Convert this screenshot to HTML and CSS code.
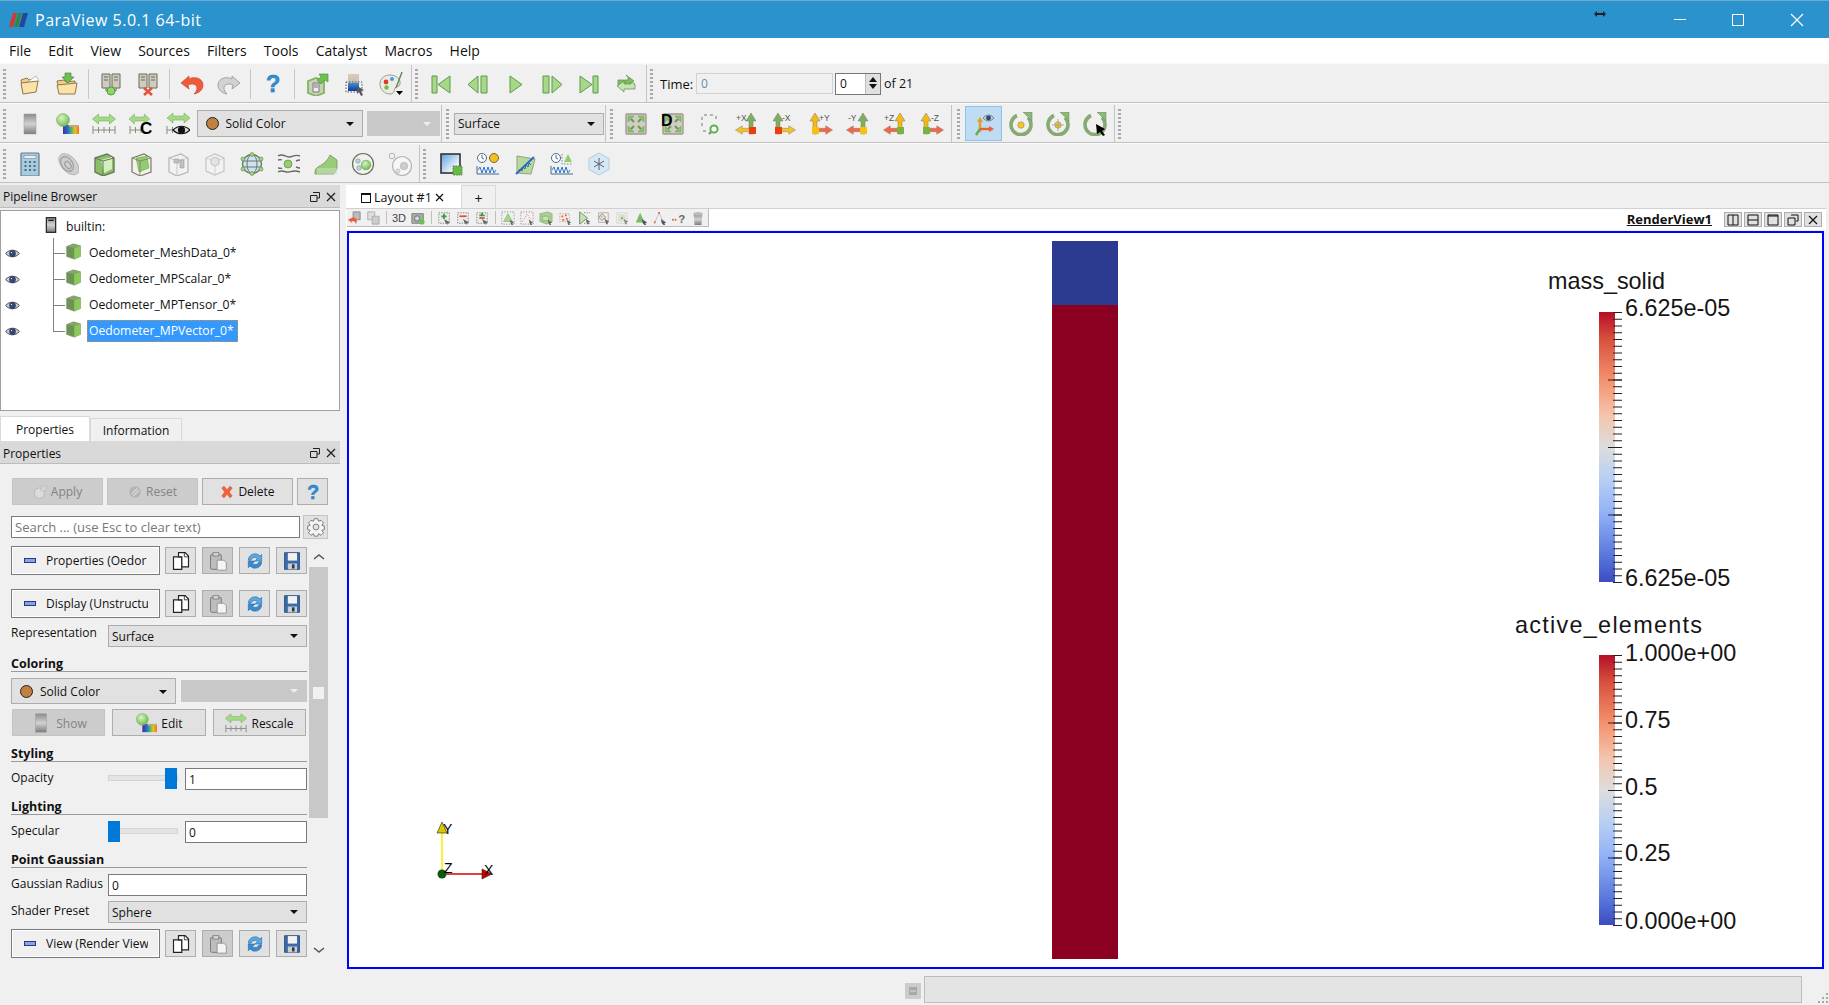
FILE: index.html
```html
<!DOCTYPE html>
<html lang="en">
<head>
<meta charset="UTF-8">
<title>ParaView 5.0.1 64-bit</title>
<link rel="stylesheet" href="styles.css">
</head>
<body>

<!-- icon sprite, everything below is drawn on a 24x24 box unless noted -->
<svg class="sprite" width="0" height="0">
  <defs>
    <linearGradient id="g-bar" x1="0" x2="0" y1="0" y2="1"><stop offset="0" stop-color="#8c8c8c"/><stop offset=".5" stop-color="#d2d2d2"/><stop offset="1" stop-color="#7c7c7c"/></linearGradient>
    <linearGradient id="g-rain" x1="0" x2="1" y1="0" y2="0"><stop offset="0" stop-color="#4a2a9a"/><stop offset=".3" stop-color="#2a6ad0"/><stop offset=".55" stop-color="#4ac060"/><stop offset=".75" stop-color="#f0c020"/><stop offset="1" stop-color="#f07020"/></linearGradient>
    <linearGradient id="g-map" x1="0" x2="0" y1="0" y2="1"><stop offset="0" stop-color="#d8cdb8"/><stop offset=".5" stop-color="#c8bfae"/><stop offset=".55" stop-color="#3a8ad8"/><stop offset="1" stop-color="#1a3a9a"/></linearGradient>
    <linearGradient id="g-box" x1="0" x2="1" y1="0" y2="1"><stop offset="0" stop-color="#5aa0e0"/><stop offset=".7" stop-color="#e8f2fa"/><stop offset="1" stop-color="#fff"/></linearGradient>
    <radialGradient id="g-ball" cx=".4" cy=".35" r=".7"><stop offset="0" stop-color="#d8f4c0"/><stop offset="1" stop-color="#6ab84a"/></radialGradient>
    <path id="arr-u" d="M-2 22V9h-3l5-8 5 8h-3v13z" stroke="#7a7a60" stroke-width=".5"/>
    <path id="arr-h" d="M0 -2h15v-3l8 5-8 5v-3H0z" stroke="#7a7a60" stroke-width=".5"/>
    <path id="arr-d" d="M0 0l6-5v3h11v-3l6 5-6 5v-3H6v3z" fill="#a2dc82" stroke="#7ea868" stroke-width=".6"/>
    <path id="bolt-c" d="M8 3.500a10 10 0 1 0 11 2" fill="none" stroke="#86aa72" stroke-width="3.600"/>
  </defs>

  <symbol id="i-open" viewBox="0 0 24 24"><path d="M3 8l6-2 2 2 5-1 2 8-13 5z" fill="#f0cf88" stroke="#8c7a50"/><path d="M8 11l10-7 3 5-9 6z" fill="#fff" stroke="#a0a0a0" stroke-width=".7"/><path d="M3 11l17-2-2 11-13 2z" fill="#fbe2a6" stroke="#8c7a50"/></symbol>
  <symbol id="i-load" viewBox="0 0 24 24"><path d="M2 9l7-1 2 2 9-1v4H3z" fill="#f0cf88" stroke="#8c7a50"/><path d="M2 13l20-2-2 11H4z" fill="#fbe2a6" stroke="#8c7a50"/><path d="M10 1h6v4h3l-6 6-6-6h3z" fill="#6cc050" stroke="#4a8a38" stroke-width=".7"/></symbol>
  <symbol id="i-conn" viewBox="0 0 24 24"><path d="M3 2h8v14H3zM13 2h8v14h-8z" fill="#d0ccbc" stroke="#6a6a5e"/><path d="M5 5h4M5 8h4M15 5h4M15 8h4" stroke="#6a6a5e"/><path d="M7 16v3h10v-3" fill="none" stroke="#6a6a5e"/><circle cx="12" cy="19" r="4" fill="#8ed868" stroke="#5a9a44"/></symbol>
  <symbol id="i-disc" viewBox="0 0 24 24"><path d="M3 2h8v14H3zM13 2h8v14h-8z" fill="#d0ccbc" stroke="#6a6a5e"/><path d="M5 5h4M5 8h4M15 5h4M15 8h4" stroke="#6a6a5e"/><path d="M8 16l8 7M16 16l-8 7" stroke="#e8523a" stroke-width="2.600"/></symbol>
  <symbol id="i-undo" viewBox="0 0 24 24"><path d="M9 4L1 11l8 6-1-4c4-2 9-1 9 3 0 2-1 4-3 6 5-1 9-4 9-9 0-7-9-9-14-6z" fill="#f0593a" stroke="#c8472a" stroke-width=".7"/></symbol>
  <symbol id="i-redo" viewBox="0 0 24 24"><path d="M15 4l8 7-8 6 1-4c-4-2-9-1-9 3 0 2 1 4 3 6-5-1-9-4-9-9 0-7 9-9 14-6z" fill="#d2d2d2" stroke="#a4a4a4"/></symbol>
  <symbol id="i-srvgo" viewBox="0 0 24 24"><path d="M3 9l8-3 8 3v12l-8 3-8-3z" fill="#d0ccbc" stroke="#7cb85c" stroke-width="1.800"/><path d="M8 11h6v9H8z" fill="#eee" stroke="#777"/><path d="M9 13h4M9 15h4" stroke="#777"/><path d="M12 8l4-3-2-3h9v8l-3-2-4 4z" fill="#6cc050" stroke="#4a8a38" stroke-width=".6"/></symbol>
  <symbol id="i-cmap" viewBox="0 0 24 24"><path d="M6 2h11v17H6z" fill="url(#g-map)"/><path d="M4 10h16v10H4z" fill="none" stroke="#555" stroke-dasharray="1.500 1.500"/><path d="M15 14l7 4-3 1 2 4-2 1-2-4-2 2z" fill="#556"/></symbol>
  <symbol id="i-palette" viewBox="0 0 24 24"><path d="M11 3c6 0 11 4 10 9 0 3-4 2-5 4-1 3-1 6-5 6-5 0-10-4-10-10S6 3 11 3z" fill="#ecebe4" stroke="#9a9a90"/><circle cx="13" cy="7" r="2" fill="#3ca0e0"/><circle cx="7" cy="10" r="2.400" fill="#e03c28"/><circle cx="7.500" cy="15.500" r="2.200" fill="#6cc050"/><path d="M17 16L23 0" stroke="#5c8a50" stroke-width="1.400"/><path d="M17 19h7l-3.500 4z" fill="#000"/></symbol>

  <symbol id="i-first" viewBox="0 0 24 24"><path d="M3 4h5v17H3zM21 4v17L9 12.500z" fill="#a6d888" stroke="#5f9a4a"/></symbol>
  <symbol id="i-prev" viewBox="0 0 24 24"><path d="M12 4v17L2 12.500zM15 4h6v17h-6z" fill="#a6d888" stroke="#5f9a4a"/></symbol>
  <symbol id="i-play" viewBox="0 0 24 24"><path d="M7 4v17l12-8.500z" fill="#a6d888" stroke="#5f9a4a"/></symbol>
  <symbol id="i-next" viewBox="0 0 24 24"><path d="M3 4h6v17H3zM12 4v17l10-8.500z" fill="#a6d888" stroke="#5f9a4a"/></symbol>
  <symbol id="i-last" viewBox="0 0 24 24"><path d="M3 4v17l12-8.500zM16 4h5v17h-5z" fill="#a6d888" stroke="#5f9a4a"/></symbol>
  <symbol id="i-loop" viewBox="0 0 24 24"><path d="M4 13V8h10V5l-2-2 8 6-8 5v-3H8v2z" fill="#7cc05c" stroke="#5f8a4a" stroke-width=".7"/><path d="M21 12v5H10v3l-7-6 7-5v3h7v-2z" fill="#c6e4b0" stroke="#5f8a4a" stroke-width=".7"/></symbol>

  <symbol id="i-bar" viewBox="0 0 24 24"><rect x="6" y="2" width="12" height="20" fill="url(#g-bar)" stroke="#999" stroke-width=".5"/></symbol>
  <symbol id="i-edit" viewBox="0 0 24 24"><rect x="8" y="13" width="16" height="9" fill="url(#g-rain)"/><path d="M14 13h10v2H14z" fill="#c8a878"/><circle cx="8" cy="8" r="6.500" fill="url(#g-ball)" stroke="#7aa860" stroke-width=".5"/></symbol>
  <symbol id="i-rescale" viewBox="0 0 24 24"><use href="#arr-d" transform="translate(.5 7)"/><path d="M1 18h22M1 14v8M6.500 15v6M12 15v6M17.500 15v6M23 14v8" stroke="#8a8a80" fill="none"/></symbol>
  <symbol id="i-rsc" viewBox="0 0 24 24"><use href="#arr-d" transform="translate(0 7) scale(.9 1)"/><path d="M1 18h12M1 14v8M6.500 15v6M12 15v6" stroke="#8a8a80" fill="none"/></symbol>
  <symbol id="i-rse" viewBox="0 0 24 24"><use href="#arr-d" transform="translate(1 6)"/><path d="M1 18h10M1 14v8M6.500 15v6" stroke="#8a8a80" fill="none"/><path d="M7 18c5-5 12-5 17 0-5 5-12 5-17 0z" fill="#ddd" stroke="#111" stroke-width="1.200"/><circle cx="15.500" cy="18" r="3.600" fill="#111"/></symbol>

  <symbol id="i-reset" viewBox="0 0 24 24"><rect x="2" y="2" width="20" height="20" rx="1" fill="#d0cec2" stroke="#9e9c8e" stroke-width="1.400"/><path d="M10 10L7 7M14 10l3-3M10 14l-3 3M14 14l3 3" stroke="#6e9a54" stroke-width="2.200"/><path d="M4 10V4h6zM20 10V4h-6zM4 14v6h6zM20 14v6h-6z" fill="#8cc070" stroke="#6e9a54" stroke-width=".5"/></symbol>
  <symbol id="i-zoombox" viewBox="0 0 24 24"><path d="M6 3h12M4 5v12M5 19h5" stroke="#777" stroke-dasharray="3 3" fill="none"/><path d="M18 4v6" stroke="#777" stroke-dasharray="3 3"/><circle cx="16" cy="17" r="3.600" fill="#fff" stroke="#5ab04a" stroke-width="2"/><path d="M13 20l-2 2" stroke="#5ab04a" stroke-width="2.400"/></symbol>

  <symbol id="i-px" viewBox="0 0 24 24"><use href="#arr-u" transform="translate(16 0)" fill="#7cb060"/><use href="#arr-h" transform="translate(20 18) scale(-.85 .85)" fill="#f4c028"/><rect x="14" y="15" width="7" height="7" fill="#f03a10"/></symbol>
  <symbol id="i-mx" viewBox="0 0 24 24"><use href="#arr-u" transform="translate(6 0)" fill="#7cb060"/><use href="#arr-h" transform="translate(4 18) scale(.85)" fill="#f4c028"/><rect x="3" y="15" width="7" height="7" fill="#f03a10"/></symbol>
  <symbol id="i-py" viewBox="0 0 24 24"><use href="#arr-u" transform="translate(6 0)" fill="#f4b818"/><use href="#arr-h" transform="translate(4 18) scale(.85)" fill="#f0684a"/><rect x="3" y="15" width="7" height="7" fill="#f8c010"/></symbol>
  <symbol id="i-my" viewBox="0 0 24 24"><use href="#arr-u" transform="translate(17 0)" fill="#7cb060"/><use href="#arr-h" transform="translate(20 18) scale(-.85 .85)" fill="#f0684a"/><rect x="14" y="15" width="7" height="7" fill="#f8c010"/></symbol>
  <symbol id="i-pz" viewBox="0 0 24 24"><use href="#arr-u" transform="translate(17 0)" fill="#f4b818"/><use href="#arr-h" transform="translate(20 18) scale(-.85 .85)" fill="#f0684a"/><rect x="14" y="15" width="7" height="7" fill="#7cb040"/></symbol>
  <symbol id="i-mz" viewBox="0 0 24 24"><use href="#arr-u" transform="translate(6 0)" fill="#f4b818"/><use href="#arr-h" transform="translate(4 18) scale(.85)" fill="#f0684a"/><rect x="3" y="15" width="7" height="7" fill="#7cb040"/></symbol>

  <symbol id="i-axes" viewBox="0 0 24 24"><path d="M8 20V9" stroke="#e0a020" stroke-width="2.400"/><path d="M5 10l3-5 3 5z" fill="#e0a020"/><path d="M8 17h10" stroke="#e8603a" stroke-width="2.400"/><path d="M17 14l5 3-5 3z" fill="#e8603a"/><path d="M8 17l-4 6" stroke="#6aa848" stroke-width="2.400"/><path d="M11 6c3-4 8-4 11 0-3 4-8 4-11 0z" fill="#b8c8d8" stroke="#555" stroke-width=".6"/><circle cx="16.500" cy="6" r="2.400" fill="#2a4a7a"/></symbol>
  <symbol id="i-center" viewBox="0 0 24 24"><use href="#bolt-c"/><path d="M14 0h9v9z" fill="#8cb878" stroke="#6a8a58" stroke-width=".5"/><circle cx="12" cy="13" r="3.200" fill="#f8c820" stroke="#888" stroke-width=".6"/></symbol>
  <symbol id="i-center2" viewBox="0 0 24 24"><use href="#bolt-c"/><path d="M14 0h9v9z" fill="#8cb878" stroke="#6a8a58" stroke-width=".5"/><circle cx="12" cy="13" r="3.200" fill="#f8c820" stroke="#888" stroke-width=".6"/><path d="M12 7v12M6 13h12" stroke="#999" stroke-width=".8"/></symbol>
  <symbol id="i-pick" viewBox="0 0 24 24"><use href="#bolt-c"/><path d="M14 0h9v9z" fill="#8cb878" stroke="#6a8a58" stroke-width=".5"/><path d="M13 12l9 5-3 2 3 4-2 1-3-4-3 2z" fill="#000"/></symbol>

  <symbol id="i-calc" viewBox="0 0 24 24"><rect x="3" y="1" width="18" height="23" rx="1" fill="#a4cce4" stroke="#6a7a80" stroke-width="1.200"/><rect x="6" y="3.500" width="12" height="3" fill="#e8eef2" stroke="#6a7a80" stroke-width=".5"/><path d="M6.500 9h2v2h-2zM11 9h2v2h-2zM15.500 9h2v2h-2zM6.500 13h2v2h-2zM11 13h2v2h-2zM15.500 13h2v2h-2zM6.500 17h2v2h-2zM11 17h2v2h-2zM15.500 17h2v2h-2z" fill="#5a6a72"/></symbol>
  <symbol id="i-contour" viewBox="0 0 24 24"><path d="M7 2c8-2 17 8 17 16 0 5-6 6-11 3C6 17 0 5 7 2z" fill="#cfcfcf" stroke="#b4b4b4"/><ellipse cx="12" cy="12" rx="5.500" ry="8" transform="rotate(-35 12 12)" fill="none" stroke="#a2a2a2" stroke-width="1.400"/><ellipse cx="13" cy="13" rx="2.500" ry="4" transform="rotate(-35 13 13)" fill="none" stroke="#a2a2a2" stroke-width="1.400"/></symbol>
  <symbol id="i-clip" viewBox="0 0 24 24"><path d="M3 6l12-4 7 4v14l-11 4-8-4z" fill="#8cc068" stroke="#6a7a5c" stroke-width="1.400"/><path d="M9 8l11-3v12l-8 4z" fill="#d4eec0"/><path d="M3 6l8 3v15M11 9l11-3" fill="none" stroke="#6a7a5c"/></symbol>
  <symbol id="i-slice" viewBox="0 0 24 24"><path d="M3 6l12-4 7 4v14l-11 4-8-4z" fill="#f2f2ec" stroke="#7a7a64" stroke-width="1.200"/><path d="M7 6l11-2 2 12-10 4z" fill="#92cc70" stroke="#6a9a4c" stroke-width=".5"/><path d="M3 6l8 3v15M11 9l11-3" fill="none" stroke="#7a7a64" stroke-width=".8"/></symbol>
  <symbol id="i-thresh" viewBox="0 0 24 24"><path d="M3 6l12-4 7 4v14l-11 4-8-4z" fill="#f2f2f2" stroke="#b4b4b4" stroke-width="1.200"/><path d="M3 6l8 3v15M11 9l11-3" fill="none" stroke="#bebebe" stroke-width=".8"/><path d="M8 7h5v4H8zM14 8h4v8h-4z" fill="#c0c0c0" stroke="#9c9c9c" stroke-width=".6"/></symbol>
  <symbol id="i-extract" viewBox="0 0 24 24"><path d="M3 6l9-4 9 4v13l-9 4-9-4z" fill="#f2f2f2" stroke="#c4c4c4" stroke-width="1.200"/><path d="M3 6l9 4v13M12 10l9-4" fill="none" stroke="#cccccc" stroke-width=".8"/><path d="M8 7l4-2 4 2v5l-4 2-4-2z" fill="#e4e4e4" stroke="#b4b4b4" stroke-width=".8"/></symbol>
  <symbol id="i-glyph" viewBox="0 0 24 24"><circle cx="12" cy="12" r="9.500" fill="#cfe2f2" stroke="#6a7868" stroke-width="1.400"/><ellipse cx="12" cy="12" rx="5" ry="9.500" fill="none" stroke="#6a7868"/><path d="M3 9h18M3 15h18" stroke="#6a7868"/><g fill="#9ed47a" stroke="#5f8a4a" stroke-width=".6"><circle cx="12" cy="2.500" r="2"/><circle cx="12" cy="21.500" r="2"/><circle cx="3" cy="7" r="2"/><circle cx="21" cy="7" r="2"/><circle cx="3" cy="17" r="2"/><circle cx="21" cy="17" r="2"/></g></symbol>
  <symbol id="i-stream" viewBox="0 0 24 24"><path d="M1 4c5-3 7 1 11 1s6-3 11-1M1 8c4-1 3 0 4 0M19 9c2-1 3-1 4-1M1 16c2 0 3 1 4 0M19 15c2 1 3 1 4 1M1 20c5-3 7 1 11 0s6-2 11 0" fill="none" stroke="#6a6a5c" stroke-width="1.400"/><circle cx="11" cy="12" r="4" fill="#96d06e" stroke="#5f8a4a" stroke-width=".7"/></symbol>
  <symbol id="i-warp" viewBox="0 0 24 24"><path d="M1 20c0-7 10-5 15-17l7 5v9c-3 4-3 5-3 5H1z" fill="#98cc78" stroke="#6a8a58" stroke-width=".7"/><path d="M3 16h20v6H3z" fill="#c8dcb8" opacity=".6"/></symbol>
  <symbol id="i-group" viewBox="0 0 24 24"><circle cx="12" cy="12" r="10.500" fill="#f2f2ea" stroke="#6a6a5c" stroke-width="1.200"/><circle cx="15" cy="13" r="4.800" fill="url(#g-ball)" stroke="#5f8a4a" stroke-width=".5"/><circle cx="7" cy="9" r="2.200" fill="#b4d8ec" stroke="#6a8a9c" stroke-width=".6"/><circle cx="8" cy="16" r="2.200" fill="#b4d8ec" stroke="#6a8a9c" stroke-width=".6"/></symbol>
  <symbol id="i-extrb" viewBox="0 0 24 24"><circle cx="14" cy="14" r="9.500" fill="#f6f6f6" stroke="#b4b4b4" stroke-width="1.200"/><circle cx="16" cy="14" r="3.800" fill="#cccccc" stroke="#aaa" stroke-width=".5"/><circle cx="10" cy="19" r="2" fill="#e4e4e4" stroke="#aaa" stroke-width=".6"/><circle cx="4" cy="4" r="2.800" fill="#f0f0f0" stroke="#b4b4b4"/></symbol>

  <symbol id="i-sel" viewBox="0 0 24 24"><rect x="2" y="2" width="19" height="19" fill="url(#g-box)" stroke="#333" stroke-width="1.600"/><rect x="14" y="14" width="9" height="9" fill="#6cb84a" stroke="#4a8a38" stroke-dasharray="1.500 1"/></symbol>
  <symbol id="i-plot" viewBox="0 0 24 24"><circle cx="6" cy="6" r="4.500" fill="#fff" stroke="#4a6a8a"/><path d="M6 3v3l2 1" stroke="#4a6a8a" fill="none"/><circle cx="18" cy="6" r="4.500" fill="#f4c020" stroke="#7a6a30"/><path d="M1 14v8h22" stroke="#4a6a8a" fill="none"/><path d="M2 18l2-3 2 6 2-6 2 6 2-6 2 6 2-6 2 6 2-3" stroke="#2a7ac8" fill="none"/></symbol>
  <symbol id="i-line" viewBox="0 0 24 24"><path d="M4 4l18 3-4 15-14-1z" fill="#b8d8a0" stroke="#8aa878"/><path d="M3 22L21 5" stroke="#2a6ac8" stroke-width="2"/><path d="M6 20l1-3 2 2 1-4 2 2 1-4 2 2 1-4 2 2" stroke="#3a6a8a" fill="none"/></symbol>
  <symbol id="i-plots" viewBox="0 0 24 24"><circle cx="6" cy="6" r="4.500" fill="#fff" stroke="#4a6a8a"/><path d="M6 3v3l2 1" stroke="#4a6a8a" fill="none"/><path d="M14 10l4-8 4 8z" fill="#8ed068"/><path d="M12 2v10h11" stroke="#888" stroke-dasharray="1.500 1.500" fill="none"/><path d="M1 14v8h22" stroke="#4a6a8a" fill="none"/><path d="M2 18l2-3 2 6 2-6 2 6 2-6 2 6 2-6 2 6 2-3" stroke="#2a7ac8" fill="none"/></symbol>
  <symbol id="i-hex" viewBox="0 0 24 24"><path d="M12 1l10 5.500v11L12 23 2 17.500v-11z" fill="#d6e8f4" stroke="#b4cadc"/><path d="M12 6v12M7 9l10 6M17 9L7 15" stroke="#56626e"/></symbol>

  <symbol id="i-eye" viewBox="0 0 24 16"><path d="M1 8c6-7 16-7 22 0-6 7-16 7-22 0z" fill="#cfd4da" stroke="#333" stroke-width="1.400"/><circle cx="12" cy="8" r="5" fill="#2f4a7c" stroke="#1a1a2a" stroke-width=".6"/><circle cx="10.500" cy="6.500" r="1" fill="#fff"/></symbol>
  <symbol id="i-cube" viewBox="0 0 24 24"><path d="M2 5l10-4 10 3v15l-9 4-11-4z" fill="#6e9455" stroke="#8a9a7c" stroke-width=".6"/><path d="M13 7l9-3v15l-9 4z" fill="#8dc85c"/><path d="M2 5l11 2 9-3-10-3z" fill="#87a56e"/></symbol>
  <symbol id="i-srv" viewBox="0 0 24 24"><rect x="5" y="1" width="14" height="22" fill="url(#g-bar)" stroke="#222" stroke-width="1.800"/><path d="M8 5h8" stroke="#222" stroke-width="2"/></symbol>
  <symbol id="i-apply" viewBox="0 0 24 24"><path d="M3 8l8-3 8 3v12l-8 3-8-3z" fill="#dcdcdc" stroke="#aaa"/><path d="M12 8l4-3-2-3h9v8l-3-2-4 4z" fill="#d4d4d4" stroke="#b0b0b0" stroke-width=".6"/></symbol>
  <symbol id="i-reset2" viewBox="0 0 24 24"><circle cx="12" cy="12" r="10" fill="#b4b4b4"/><path d="M6 16L16 6M9 19L19 9" stroke="#dcdcdc" stroke-width="2"/></symbol>
  <symbol id="i-del" viewBox="0 0 24 24"><path d="M3 5l4-3 5 6 5-6 4 3-5 7 5 7-4 3-5-6-5 6-4-3 5-7z" fill="#f0603c" stroke="#c8482a" stroke-width=".7"/></symbol>
  <symbol id="i-gear" viewBox="0 0 24 24"><path d="M10 2h4l1 3 3-1 3 3-2 3 3 1v4l-3 1 2 3-3 3-3-2-1 3h-4l-1-3-3 2-3-3 2-3-3-1v-4l3-1-2-3 3-3 3 1z" fill="#f4f4f4" stroke="#6a6a6a"/><circle cx="12" cy="12" r="3.500" fill="#e4e4e4" stroke="#6a6a6a"/></symbol>
  <symbol id="i-copy" viewBox="0 0 24 24"><path d="M3 7h10v15H3z" fill="#fff" stroke="#222" stroke-width="1.400"/><path d="M9 2h8l4 4v13h-8V7H9z" fill="#fff" stroke="#222" stroke-width="1.400"/><path d="M16 2v5h5" fill="none" stroke="#222"/></symbol>
  <symbol id="i-paste" viewBox="0 0 24 24"><rect x="3" y="4" width="13" height="18" rx="2" fill="#bdbdbd" stroke="#7c7c7c" stroke-width="1.200"/><rect x="6" y="2" width="7" height="4" fill="#d8d8d8" stroke="#7c7c7c"/><path d="M11 11h8l3 3v9H11z" fill="#f4f4f4" stroke="#8c8c8c"/></symbol>
  <symbol id="i-sync" viewBox="0 0 24 24"><path d="M4 11a8 8 0 0 1 14-5l2-2v8h-8l3-3a5 5 0 0 0-8 2z" fill="#5aa8e0" stroke="#2a70b0" stroke-width=".8"/><path d="M20 13a8 8 0 0 1-14 5l-2 2v-8h8l-3 3a5 5 0 0 0 8-2z" fill="#3a8ad0" stroke="#2a70b0" stroke-width=".8"/></symbol>
  <symbol id="i-save" viewBox="0 0 24 24"><path d="M3 2h18v20H3z" fill="#3a6aa8" stroke="#2a4a7a"/><rect x="7" y="2.500" width="11" height="9" fill="#f2f2f2"/><rect x="7" y="15" width="11" height="7" fill="#c8ccd4"/><rect x="12" y="16" width="3" height="5" fill="#333"/></symbol>

  <!-- render view toolbar, 16x16 -->
  <symbol id="v-undo" viewBox="0 0 16 16"><path d="M7 1h8v9H7z" fill="#bbb" stroke="#888"/><path d="M7 7L1 10l5 4-1-2c3-1 5 0 5 3 3-4 0-8-3-8z" fill="#e8603a"/></symbol>
  <symbol id="v-redo" viewBox="0 0 16 16"><path d="M2 1h8v9H2z" fill="#ddd" stroke="#aaa"/><path d="M7 6h8v9H7z" fill="#ccc" stroke="#aaa"/></symbol>
  <symbol id="v-shot" viewBox="0 0 16 16"><path d="M1 3h13v11H1z" fill="#a6aea6" stroke="#777"/><circle cx="7" cy="8.500" r="3" fill="#cdd" stroke="#666"/><circle cx="12.500" cy="12.500" r="3" fill="#6cc050"/></symbol>
  <symbol id="v-cplus" viewBox="0 0 16 16"><path d="M2 2h12v12H2z" fill="#ecece6" stroke="#777" stroke-dasharray="1.500 1.500"/><path d="M7 3h2v2h2v2H9v2H7V7H5V5h2z" fill="#3a9a4a"/><path d="M8 9l7 4-3 1 1 2-3-2z" fill="#666"/></symbol>
  <symbol id="v-cminus" viewBox="0 0 16 16"><path d="M2 2h12v12H2z" fill="#ecece6" stroke="#777" stroke-dasharray="1.500 1.500"/><path d="M4 5h8v2H4z" fill="#e04a4a"/><path d="M8 9l7 4-3 1 1 2-3-2z" fill="#666"/></symbol>
  <symbol id="v-cboth" viewBox="0 0 16 16"><path d="M2 2h12v12H2z" fill="#ecece6" stroke="#777" stroke-dasharray="1.500 1.500"/><path d="M7 2h2v2h2v2H5V4h2z" fill="#3a9a4a"/><path d="M5 7h6v2H5z" fill="#e04a4a"/><path d="M8 9l7 4-3 1 1 2-3-2z" fill="#666"/></symbol>
  <symbol id="v-surf" viewBox="0 0 16 16"><path d="M1 1h14v14H1z" fill="none" stroke="#666" stroke-dasharray="1 2"/><path d="M3 12L8 3l5 9z" fill="#a8d490" stroke="#7aa460" stroke-width=".6"/><path d="M10 10l5 3-2 1 1 2-2 0-1-2z" fill="#666"/></symbol>
  <symbol id="v-pts" viewBox="0 0 16 16"><path d="M1 1h14v14H1z" fill="none" stroke="#666" stroke-dasharray="1 2"/><path d="M3 12L8 3l5 9" fill="none" stroke="#e8603a" stroke-dasharray="1 2"/><path d="M10 10l5 3-2 1 1 2-2 0-1-2z" fill="#666"/></symbol>
  <symbol id="v-blk" viewBox="0 0 16 16"><path d="M1 3l9-2 5 2v9l-6 3-8-3z" fill="#a8d090" stroke="#84a474" stroke-width=".7"/><path d="M4 6h7v5H4z" fill="#c6e4b2" stroke="#7a9a68" stroke-width=".6"/><path d="M10 10l5 3-2 1 1 2-2 0-1-2z" fill="#666"/></symbol>
  <symbol id="v-red" viewBox="0 0 16 16"><path d="M2 3h11v9H2z" fill="#f4ece8" stroke="#aaa" stroke-dasharray="1.500 1.500"/><path d="M4 5h2v2H4zM8 4h2v2H8zM5 9h2v2H5zM9 8h2v2H9z" fill="#e8603a"/><path d="M10 10l5 3-2 1 1 2-2 0-1-2z" fill="#666"/></symbol>
  <symbol id="v-grn" viewBox="0 0 16 16"><path d="M3 1v14l9-7z" fill="#c4e2b2" stroke="#6a8a6a"/><path d="M8 2h7M8 14h7" stroke="#6a8a6a" stroke-dasharray="1.500 1.500"/><path d="M10 9l5 3-2 1 1 2-2 0-1-2z" fill="#666"/></symbol>
  <symbol id="v-rgr" viewBox="0 0 16 16"><path d="M3 2h11v11H3z" fill="#f2f0ea" stroke="#aaa"/><path d="M3 7l4-4 4 4-4 4z" fill="#e0e0cc" stroke="#888"/><path d="M6 6l1 1M9 9h2" stroke="#e8603a"/><path d="M10 9l5 3-2 1 1 2-2 0-1-2z" fill="#666"/></symbol>
  <symbol id="v-ptg" viewBox="0 0 16 16"><path d="M2 2h12v12H2z" fill="#eef0e8" stroke="#bbb" stroke-dasharray="1.500 1.500"/><path d="M4 4h8v8H4z" fill="#d6decc"/><path d="M7 7h2v2H7z" fill="#7aa85c"/><path d="M10 9l5 3-2 1 1 2-2 0-1-2z" fill="#888"/></symbol>
  <symbol id="v-tri" viewBox="0 0 16 16"><path d="M2 13L7 2l5 11z" fill="#7cbc60"/><path d="M9 9l6 4-2 1 1 2-2 0-2-2z" fill="#556"/></symbol>
  <symbol id="v-tri2" viewBox="0 0 16 16"><path d="M2 13L7 2l5 11" fill="none" stroke="#bbb"/><path d="M1 12h2v2H1zM6 1h2v2H6zM11 12h2v2h-2z" fill="#e8603a"/><path d="M9 9l6 4-2 1 1 2-2 0-2-2z" fill="#556"/></symbol>
  <symbol id="v-ask" viewBox="0 0 16 16"><rect x="0" y="9" width="2" height="2" fill="#e8603a"/><rect x="3" y="9" width="2" height="2" fill="#e8603a"/></symbol>
  <symbol id="v-bin" viewBox="0 0 16 16"><path d="M3 3h10l-1 13H4z" fill="url(#g-bar)"/><ellipse cx="8" cy="3" rx="5" ry="2" fill="#bbb"/></symbol>
</svg>

<div class="titlebar">
  <svg class="logo" width="20" height="14" viewBox="0 0 20 14">
    <path d="M4 0h4L4 14H0z" fill="#d6382c"/><path d="M9 0h4L9 14H5z" fill="#2e8a3e"/><path d="M14 0h5l-4 14h-5z" fill="#25469c"/>
  </svg>
  <span class="apptitle">ParaView 5.0.1 64-bit</span>
  <div class="winbtns">
    <span class="winbtn"><i class="w-min"></i></span>
    <span class="winbtn"><i class="w-max"></i></span>
    <span class="winbtn">
      <svg width="14" height="14" viewBox="0 0 14 14"><path d="M1 1l12 12M13 1L1 13" stroke="#fff" stroke-width="1.200"/></svg>
    </span>
  </div>
  <svg class="hcursor" width="12" height="8" viewBox="0 0 12 8"><path d="M0 4l3-3v2h6V1l3 3-3 3V5H3v2z" fill="#222"/></svg>
</div>

<nav class="menubar">
  <span>File</span><span>Edit</span><span>View</span><span>Sources</span><span>Filters</span><span>Tools</span><span>Catalyst</span><span>Macros</span><span>Help</span>
</nav>

<div class="tbrow">
  <div class="tgroup w-412">
    <i class="grip"></i>
    <span class="tb"><svg class="ic"><use href="#i-open"/></svg></span>
    <span class="tb"><svg class="ic"><use href="#i-load"/></svg></span>
    <i class="sep"></i>
    <span class="tb"><svg class="ic"><use href="#i-conn"/></svg></span>
    <span class="tb"><svg class="ic"><use href="#i-disc"/></svg></span>
    <i class="sep"></i>
    <span class="tb"><svg class="ic"><use href="#i-undo"/></svg></span>
    <span class="tb"><svg class="ic"><use href="#i-redo"/></svg></span>
    <i class="sep"></i>
    <span class="tb"><svg class="ic" viewBox="0 0 24 24"><text class="ic-q" x="12" y="20" text-anchor="middle">?</text></svg></span>
    <i class="sep"></i>
    <span class="tb"><svg class="ic"><use href="#i-srvgo"/></svg></span>
    <span class="tb"><svg class="ic"><use href="#i-cmap"/></svg></span>
    <span class="tb"><svg class="ic"><use href="#i-palette"/></svg></span>
  </div>
  <div class="tgroup w-235">
    <i class="grip"></i>
    <span class="tb"><svg class="ic"><use href="#i-first"/></svg></span>
    <span class="tb"><svg class="ic"><use href="#i-prev"/></svg></span>
    <span class="tb"><svg class="ic"><use href="#i-play"/></svg></span>
    <span class="tb"><svg class="ic"><use href="#i-next"/></svg></span>
    <span class="tb"><svg class="ic"><use href="#i-last"/></svg></span>
    <span class="tb"><svg class="ic"><use href="#i-loop"/></svg></span>
  </div>
  <div class="tgroup noline">
    <i class="grip"></i>
    <span class="timelabel">Time:</span>
    <span class="timefield">0</span>
    <span class="spin">0<span class="spinarrows"><i class="sp-up"></i><i class="sp-down"></i></span></span>
    <span class="timeof">of 21</span>
  </div>
</div>

<div class="tbrow">
  <div class="tgroup w-442">
    <i class="grip"></i>
    <span class="tb"><svg class="ic"><use href="#i-bar"/></svg></span>
    <span class="tb"><svg class="ic"><use href="#i-edit"/></svg></span>
    <span class="tb"><svg class="ic"><use href="#i-rescale"/></svg></span>
    <span class="tb"><svg class="ic" viewBox="0 0 24 24"><use href="#i-rsc"/><text class="ic-c" x="11" y="22">C</text></svg></span>
    <span class="tb"><svg class="ic"><use href="#i-rse"/></svg></span>
    <div class="combo c-solid"><i class="dot"></i><span>Solid Color</span><i class="caret"></i></div>
    <div class="combo c-off"><i class="caret off"></i></div>
  </div>
  <div class="tgroup w-164">
    <i class="grip"></i>
    <div class="combo c-repr"><span>Surface</span><i class="caret"></i></div>
  </div>
  <div class="tgroup w-346">
    <i class="grip"></i>
    <span class="tb"><svg class="ic"><use href="#i-reset"/></svg></span>
    <span class="tb"><svg class="ic" viewBox="0 0 24 24"><use href="#i-reset"/><text class="ic-d" x="0" y="14">D</text></svg></span>
    <span class="tb"><svg class="ic"><use href="#i-zoombox"/></svg></span>
    <span class="tb"><svg class="ic" viewBox="0 0 24 24"><use href="#i-px"/><text class="ic-l" x="1" y="9">+X</text></svg></span>
    <span class="tb"><svg class="ic" viewBox="0 0 24 24"><use href="#i-mx"/><text class="ic-l" x="10" y="9">-X</text></svg></span>
    <span class="tb"><svg class="ic" viewBox="0 0 24 24"><use href="#i-py"/><text class="ic-l" x="10" y="9">+Y</text></svg></span>
    <span class="tb"><svg class="ic" viewBox="0 0 24 24"><use href="#i-my"/><text class="ic-l" x="2" y="9">-Y</text></svg></span>
    <span class="tb"><svg class="ic" viewBox="0 0 24 24"><use href="#i-pz"/><text class="ic-l" x="1" y="9">+Z</text></svg></span>
    <span class="tb"><svg class="ic" viewBox="0 0 24 24"><use href="#i-mz"/><text class="ic-l" x="11" y="9">-Z</text></svg></span>
  </div>
  <div class="tgroup w-163">
    <i class="grip"></i>
    <span class="tb active"><svg class="ic"><use href="#i-axes"/></svg></span>
    <span class="tb"><svg class="ic"><use href="#i-center"/></svg></span>
    <span class="tb"><svg class="ic"><use href="#i-center2"/></svg></span>
    <span class="tb"><svg class="ic"><use href="#i-pick"/></svg></span>
  </div>
  <div class="tgroup noline"><i class="grip"></i></div>
</div>

<div class="tbrow">
  <div class="tgroup w-420">
    <i class="grip"></i>
    <span class="tb"><svg class="ic"><use href="#i-calc"/></svg></span>
    <span class="tb"><svg class="ic"><use href="#i-contour"/></svg></span>
    <span class="tb"><svg class="ic"><use href="#i-clip"/></svg></span>
    <span class="tb"><svg class="ic"><use href="#i-slice"/></svg></span>
    <span class="tb"><svg class="ic"><use href="#i-thresh"/></svg></span>
    <span class="tb"><svg class="ic"><use href="#i-extract"/></svg></span>
    <span class="tb"><svg class="ic"><use href="#i-glyph"/></svg></span>
    <span class="tb"><svg class="ic"><use href="#i-stream"/></svg></span>
    <span class="tb"><svg class="ic"><use href="#i-warp"/></svg></span>
    <span class="tb"><svg class="ic"><use href="#i-group"/></svg></span>
    <span class="tb"><svg class="ic"><use href="#i-extrb"/></svg></span>
  </div>
  <div class="tgroup noline g-data">
    <i class="grip"></i>
    <span class="tb"><svg class="ic"><use href="#i-sel"/></svg></span>
    <span class="tb"><svg class="ic"><use href="#i-plot"/></svg></span>
    <span class="tb"><svg class="ic"><use href="#i-line"/></svg></span>
    <span class="tb"><svg class="ic"><use href="#i-plots"/></svg></span>
    <span class="tb"><svg class="ic"><use href="#i-hex"/></svg></span>
  </div>
</div>

<div class="main">
  <aside class="dock">
    <div class="dockhead">
      <span>Pipeline Browser</span>
      <svg class="dockbtn" width="10" height="10" viewBox="0 0 10 10"><path d="M3 .5h6.500V6H7M.5 3.500H7V9.500H.5z" fill="none" stroke="#222"/></svg>
      <svg class="dockbtn" width="10" height="10" viewBox="0 0 10 10"><path d="M1 1l8 8M9 1L1 9" stroke="#222" stroke-width="1.300"/></svg>
    </div>
    <div class="pipeline">
      <div class="node root"><svg class="srv"><use href="#i-srv"/></svg><span>builtin:</span></div>
      <div class="node"><svg class="eye"><use href="#i-eye"/></svg><svg class="cube"><use href="#i-cube"/></svg><span>Oedometer_MeshData_0*</span></div>
      <div class="node"><svg class="eye"><use href="#i-eye"/></svg><svg class="cube"><use href="#i-cube"/></svg><span>Oedometer_MPScalar_0*</span></div>
      <div class="node"><svg class="eye"><use href="#i-eye"/></svg><svg class="cube"><use href="#i-cube"/></svg><span>Oedometer_MPTensor_0*</span></div>
      <div class="node last"><svg class="eye"><use href="#i-eye"/></svg><svg class="cube"><use href="#i-cube"/></svg><span class="selected">Oedometer_MPVector_0*</span></div>
    </div>
    <div class="docktabs">
      <span class="docktab on">Properties</span>
      <span class="docktab">Information</span>
    </div>
    <div class="dockhead tight">
      <span>Properties</span>
      <svg class="dockbtn" width="10" height="10" viewBox="0 0 10 10"><path d="M3 .5h6.500V6H7M.5 3.500H7V9.500H.5z" fill="none" stroke="#222"/></svg>
      <svg class="dockbtn" width="10" height="10" viewBox="0 0 10 10"><path d="M1 1l8 8M9 1L1 9" stroke="#222" stroke-width="1.300"/></svg>
    </div>

    <div class="actions">
      <span class="btn off"><svg class="bi"><use href="#i-apply"/></svg>Apply</span>
      <span class="btn off"><svg class="bi"><use href="#i-reset2"/></svg>Reset</span>
      <span class="btn"><svg class="bi"><use href="#i-del"/></svg>Delete</span>
      <span class="btn qbtn"><svg class="bi big" viewBox="0 0 24 24"><text class="ic-q" x="12" y="20" text-anchor="middle">?</text></svg></span>
    </div>
    <div class="searchrow">
      <span class="search">Search ... (use Esc to clear text)</span>
      <span class="gear"><svg class="bi big"><use href="#i-gear"/></svg></span>
    </div>

    <div class="scroller">
      <div class="panel">
        <div class="secrow">
          <span class="secbtn"><i class="dash"></i><span>Properties (Oedor</span></span>
          <span class="sq"><svg class="bi big"><use href="#i-copy"/></svg></span>
          <span class="sq dim"><svg class="bi big"><use href="#i-paste"/></svg></span>
          <span class="sq"><svg class="bi big"><use href="#i-sync"/></svg></span>
          <span class="sq"><svg class="bi big"><use href="#i-save"/></svg></span>
        </div>
        <div class="secrow second">
          <span class="secbtn"><i class="dash"></i><span>Display (Unstructu</span></span>
          <span class="sq"><svg class="bi big"><use href="#i-copy"/></svg></span>
          <span class="sq dim"><svg class="bi big"><use href="#i-paste"/></svg></span>
          <span class="sq"><svg class="bi big"><use href="#i-sync"/></svg></span>
          <span class="sq"><svg class="bi big"><use href="#i-save"/></svg></span>
        </div>
        <div class="prop r-repr">
          <label>Representation</label>
          <div class="combo grow"><span>Surface</span><i class="caret"></i></div>
        </div>

        <h4>Coloring</h4>
        <div class="colorrow">
          <div class="combo c-solid2"><i class="dot"></i><span>Solid Color</span><i class="caret"></i></div>
          <div class="combo c-off2"><i class="caret off"></i></div>
        </div>
        <div class="btnrow">
          <span class="btn off b-show"><svg class="bi big"><use href="#i-bar"/></svg>Show</span>
          <span class="btn b-edit"><svg class="bi big"><use href="#i-edit"/></svg>Edit</span>
          <span class="btn b-resc"><svg class="bi big"><use href="#i-rescale"/></svg>Rescale</span>
        </div>

        <h4 class="styling">Styling</h4>
        <div class="prop">
          <label>Opacity</label>
          <div class="slider end"><i class="thumb"></i></div>
          <span class="field short">1</span>
        </div>

        <h4>Lighting</h4>
        <div class="prop">
          <label>Specular</label>
          <div class="slider"><i class="thumb"></i></div>
          <span class="field short">0</span>
        </div>

        <h4>Point Gaussian</h4>
        <div class="prop">
          <label>Gaussian Radius</label>
          <span class="field grow">0</span>
        </div>
        <div class="prop r-shader">
          <label>Shader Preset</label>
          <div class="combo grow"><span>Sphere</span><i class="caret"></i></div>
        </div>
        <div class="secrow r-view">
          <span class="secbtn"><i class="dash"></i><span>View (Render View</span></span>
          <span class="sq"><svg class="bi big"><use href="#i-copy"/></svg></span>
          <span class="sq dim"><svg class="bi big"><use href="#i-paste"/></svg></span>
          <span class="sq"><svg class="bi big"><use href="#i-sync"/></svg></span>
          <span class="sq"><svg class="bi big"><use href="#i-save"/></svg></span>
        </div>
      </div>
      <div class="scrollbar">
        <svg class="sarrow" width="12" height="8" viewBox="0 0 12 8"><path d="M1 6l5-4 5 4" fill="none" stroke="#555" stroke-width="1.500"/></svg>
        <div class="sthumb"><i></i></div>
        <svg class="sarrow down" width="12" height="8" viewBox="0 0 12 8"><path d="M1 2l5 4 5-4" fill="none" stroke="#555" stroke-width="1.500"/></svg>
      </div>
    </div>
  </aside>

  <section class="center">
    <div class="layouttabs">
      <span class="ltab on"><i class="ltab-box"></i>Layout #1<svg width="9" height="9" viewBox="0 0 9 9"><path d="M1 1l7 7M8 1L1 8" stroke="#111" stroke-width="1.200"/></svg></span>
      <span class="ltab plus">+</span>
    </div>
    <div class="viewhead">
      <div class="viewtools">
        <svg class="vi"><use href="#v-undo"/></svg>
        <svg class="vi"><use href="#v-redo"/></svg>
        <i class="vsep"></i>
        <span class="v3d">3D</span>
        <svg class="vi"><use href="#v-shot"/></svg>
        <i class="vsep"></i>
        <svg class="vi"><use href="#v-cplus"/></svg>
        <svg class="vi"><use href="#v-cminus"/></svg>
        <svg class="vi"><use href="#v-cboth"/></svg>
        <i class="vsep"></i>
        <svg class="vi"><use href="#v-surf"/></svg>
        <svg class="vi"><use href="#v-pts"/></svg>
        <svg class="vi"><use href="#v-blk"/></svg>
        <svg class="vi"><use href="#v-red"/></svg>
        <svg class="vi"><use href="#v-grn"/></svg>
        <svg class="vi"><use href="#v-rgr"/></svg>
        <svg class="vi"><use href="#v-ptg"/></svg>
        <svg class="vi"><use href="#v-tri"/></svg>
        <svg class="vi"><use href="#v-tri2"/></svg>
        <svg class="vi" viewBox="0 0 16 16"><use href="#v-ask"/><text class="ic-v" x="7" y="14">?</text></svg>
        <svg class="vi"><use href="#v-bin"/></svg>
      </div>
      <span class="viewname">RenderView1</span>
      <div class="viewbtns">
        <span class="vb"><svg width="12" height="12" viewBox="0 0 12 12"><path d="M1 1h10v10H1zM6 1v10" fill="none" stroke="#111"/></svg></span>
        <span class="vb"><svg width="12" height="12" viewBox="0 0 12 12"><path d="M1 1h10v10H1zM1 6h10" fill="none" stroke="#111"/></svg></span>
        <span class="vb"><svg width="12" height="12" viewBox="0 0 12 12"><path d="M1 1h10v10H1z" fill="none" stroke="#111"/><path d="M1 2h10" stroke="#111"/></svg></span>
        <span class="vb"><svg width="12" height="12" viewBox="0 0 12 12"><path d="M4 1h7v6H9M1 4h7v7H1z" fill="none" stroke="#111"/></svg></span>
        <span class="vb"><svg width="12" height="12" viewBox="0 0 12 12"><path d="M2 2l8 8M10 2l-8 8" stroke="#111" stroke-width="1.200"/></svg></span>
      </div>
    </div>

    <div class="render">
      <!-- scene uses page coordinates through the viewBox -->
      <svg class="scene" viewBox="349 232 1473 734">
        <defs>
          <linearGradient id="coolwarm" x1="0" x2="0" y1="0" y2="1">
            <stop offset="0" stop-color="#b40f26"/><stop offset=".1" stop-color="#d8503e"/><stop offset=".25" stop-color="#f4906c"/><stop offset=".38" stop-color="#f4c4ac"/><stop offset=".5" stop-color="#dddddd"/><stop offset=".63" stop-color="#b4cdf5"/><stop offset=".75" stop-color="#8fb0f5"/><stop offset=".9" stop-color="#5a78dc"/><stop offset="1" stop-color="#3b4cc0"/>
          </linearGradient>
        </defs>

        <rect x="1052" y="240" width="66" height="64" fill="#2c3a90"/>
        <rect x="1052" y="304" width="66" height="654" fill="#8b0020"/>

        <text class="lg" x="1548" y="288" textLength="117">mass_solid</text>
        <rect x="1599" y="311" width="16" height="270" fill="url(#coolwarm)"/>
        <line class="tick" x1="1617.500" x2="1617.500" y1="311" y2="582"/>
        <path class="major" d="M1608 379h14M1608 446.500h14M1608 514h14"/>
        <text class="lg" x="1625" y="315">6.625e-05</text>
        <text class="lg" x="1625" y="585">6.625e-05</text>

        <text class="lg" x="1515" y="632" textLength="187">active_elements</text>
        <rect x="1599" y="654" width="16" height="270" fill="url(#coolwarm)"/>
        <line class="tick" x1="1617.500" x2="1617.500" y1="654" y2="925"/>
        <path class="major" d="M1608 722h14M1608 789.500h14M1608 857h14"/>
        <text class="lg" x="1625" y="660">1.000e+00</text>
        <text class="lg" x="1625" y="727">0.75</text>
        <text class="lg" x="1625" y="794">0.5</text>
        <text class="lg" x="1625" y="860">0.25</text>
        <text class="lg" x="1625" y="928">0.000e+00</text>

        <path d="M442 873V826" stroke="#f4f000" stroke-width="1.500"/>
        <path d="M437 832l5-11 5 11z" fill="#d8c800" stroke="#222" stroke-width=".6"/>
        <path d="M442 873h42" stroke="#d80000" stroke-width="1.500"/>
        <path d="M482 868l10 5-10 5z" fill="#d00000" stroke="#222" stroke-width=".6"/>
        <circle cx="442" cy="873" r="4.500" fill="#0a5a12"/>
        <text class="ax" x="443" y="833">Y</text>
        <text class="ax" x="444" y="872">Z</text>
        <text class="ax" x="484" y="874">X</text>
      </svg>
    </div>
  </section>
</div>

<footer class="statusbar">
  <span class="stopbtn"><svg width="12" height="12" viewBox="0 0 12 12"><rect x="2" y="2" width="8" height="8" fill="#a8a8a8"/><path d="M3 6h6" stroke="#ddd"/></svg></span>
  <div class="progress"></div>
  <svg class="sizegrip" width="12" height="12" viewBox="0 0 12 12"><path d="M9 1h2v2H9zM5 5h2v2H5zM9 5h2v2H9zM1 9h2v2H1zM5 9h2v2H5zM9 9h2v2H9z" fill="#a8a8a8"/></svg>
</footer>

</body>
</html>
```

FILE: styles.css
```css
html, body {
  margin: 0;
  padding: 0;
}
body {
  width: 1829px;
  height: 1005px;
  overflow: hidden;
  position: relative;
  background: #f0f0f0;
  color: #111;
  font-family: "Open Sans", "Noto Sans", sans-serif;
  font-size: 12px;
}
.sprite { position: absolute; }
i { display: block; }

/* icon text */
.ic-q { font: bold 24px "Liberation Sans", sans-serif; fill: #2f8fd8; stroke: #1f6fa8; stroke-width: .4; }
.ic-c { font: bold 17px "Liberation Sans", sans-serif; fill: #000; }
.ic-d { font: bold 16px "Liberation Sans", sans-serif; fill: #000; }
.ic-l { font: 8.5px "Liberation Sans", sans-serif; fill: #555; }
.ic-v { font: bold 13px "Liberation Sans", sans-serif; fill: #666; }

/* title bar */
.titlebar {
  height: 37px;
  background: #2a92cc;
  border-top: 1px solid #6ea9cf;
  display: flex;
  align-items: center;
  position: relative;
  color: #fff;
}
.logo { margin: 0 6px 0 9px; }
.apptitle { font-size: 16px; letter-spacing: .5px; }
.winbtns { margin-left: auto; display: flex; padding-right: 3px; }
.winbtn { width: 58.5px; display: flex; justify-content: center; align-items: center; height: 24px; }
.w-min { width: 12px; height: 1px; background: #fff; margin-top: 0; }
.w-max { width: 10px; height: 10px; border: 1px solid #fff; }
.hcursor { position: absolute; left: 1594px; top: 9px; }

/* menu */
.menubar {
  height: 25px;
  background: #fff;
  display: flex;
  align-items: center;
  padding-left: 9px;
  gap: 17.2px;
  font-size: 14px;
}

/* toolbars */
.tbrow {
  height: 37px;
  padding-top: 1px;
  display: flex;
  background: #f0f0f0;
  border-top: 1px solid #fafafa;
  border-bottom: 1px solid #c0c0c0;
}
.tgroup {
  display: flex;
  align-items: center;
  border-right: 1px solid #c4c4c4;
  box-sizing: border-box;
  flex: none;
  position: relative;
}
.tgroup.noline { border-right: none; flex: 1; }
.w-412 { width: 412px; }
.w-235 { width: 235px; }
.w-442 { width: 442px; }
.w-164 { width: 164px; }
.w-346 { width: 346px; }
.w-163 { width: 163px; }
.w-420 { width: 420px; }
.grip {
  width: 3px;
  height: 30px;
  margin: 0 5px 0 3px;
  flex: none;
  background: repeating-linear-gradient(to bottom, #a8a8a8 0 2px, transparent 2px 4px);
}
.tb {
  width: 37px;
  height: 35px;
  flex: none;
  display: flex;
  align-items: center;
  justify-content: center;
  box-sizing: border-box;
}
.tb.active { background: #bfdcf2; border: 1px solid #8cc4ee; }
.ic { width: 24px; height: 24px; }
.sep {
  width: 7px;
  height: 30px;
  flex: none;
  background: linear-gradient(#c8c8c8, #c8c8c8) center / 1px 100% no-repeat;
}
.w-235 .grip { margin-left: 3px; margin-right: 4px; }
.w-164 .grip { margin-left: 4px; margin-right: 5px; }
.w-346 .grip { margin-left: 4px; margin-right: 4px; }
.w-163 .grip { margin-left: 5px; }
.g-data .grip { margin-right: 6px; }

.timelabel { margin-left: 2px; font-size: 13px; width: 36px; }
.timefield {
  width: 137px;
  height: 21px;
  box-sizing: border-box;
  background: #f0f0f0;
  border: 1px solid #d2d2d2;
  color: #6a8aa8;
  padding: 0 4px;
  line-height: 19px;
}
.spin {
  width: 46px;
  height: 22px;
  box-sizing: border-box;
  margin-left: 2px;
  border: 1px solid #777;
  background: #fff;
  padding-left: 4px;
  line-height: 20px;
  position: relative;
}
.spinarrows {
  position: absolute;
  right: 0;
  top: 0;
  bottom: 0;
  width: 14px;
  background: #e0e0e0;
  border-left: 1px solid #bbb;
}
.sp-up, .sp-down { width: 0; height: 0; margin: 3px auto 0; border: 4px solid transparent; border-top: 0; border-bottom: 5px solid #111; }
.sp-down { border: 4px solid transparent; border-bottom: 0; border-top: 5px solid #111; margin-top: 2px; }
.timeof { margin-left: 3px; font-size: 12.5px; }

/* combos */
.combo {
  height: 22px;
  box-sizing: border-box;
  background: #e1e1e1;
  border: 1px solid #adadad;
  display: flex;
  align-items: center;
  padding: 0 8px 0 3px;
  position: relative;
  flex: none;
}
.combo span { flex: 1; }
.caret { width: 0; height: 0; border: 4px solid transparent; border-bottom: 0; border-top: 4px solid #111; margin-left: auto; }
.caret.off { border-top-color: #eee; }
.dot { width: 13px; height: 13px; box-sizing: border-box; border-radius: 50%; background: #c17f42; border: 1px solid #222; margin: 0 7px 0 5px; }
.c-solid { width: 166px; height: 27px; margin-left: .5px; }
.c-off { width: 73px; margin-left: 4px; height: 25px; background: #c8c8c8; border-color: #c8c8c8; }
.c-repr { width: 150px; margin-left: 0; }

/* left dock */
.main { display: flex; height: 792px; }
.dock { width: 341px; flex: none; }
.dockhead {
  height: 23px;
  margin: 2px 1px 0 0;
  background: #d9d9d9;
  border-bottom: 1px solid #bcbcbc;
  box-sizing: border-box;
  display: flex;
  align-items: center;
  padding: 1px 4px 0 3px;
  gap: 6px;
}
.dockhead span { flex: 1; }
.dockhead.tight { margin-top: 0; padding-top: 2px; }
.pipeline {
  height: 201px;
  margin: 2px 1px 0 0;
  padding-top: 3px;
  box-sizing: border-box;
  background: #fff;
  border: 1px solid #a0a0a0;
}
.node {
  height: 26px;
  display: flex;
  align-items: center;
  position: relative;
}
.eye { width: 15px; height: 11px; margin: 0 0 0 4px; }
.cube { width: 17px; height: 17px; margin: -4px 0 0 45px; }
.node > span { margin-left: 5px; padding: 0 4px 0 2px; line-height: 22px; font-size: 12.2px; }
.node.root > span { margin-left: 5px; }
.srv { width: 16px; height: 16px; margin: -4px 0 0 42px; }
.node:not(.root)::before {
  content: "";
  position: absolute;
  left: 52px;
  top: -2px;
  width: 11px;
  height: 15px;
  border-left: 1px solid #808080;
  border-bottom: 1px solid #808080;
}
.node:not(.root):not(.last)::after {
  content: "";
  position: absolute;
  left: 52px;
  top: 12px;
  height: 16px;
  border-left: 1px solid #808080;
}
.selected {
  background: #3399ff;
  color: #fff;
  outline: 1px dotted #d09040;
  outline-offset: -1px;
}
.docktabs { display: flex; height: 30px; align-items: flex-end; }
.docktab {
  width: 92px;
  height: 23px;
  box-sizing: border-box;
  display: flex;
  align-items: center;
  justify-content: center;
  background: #f0f0f0;
  border: 1px solid #d9d9d9;
  border-bottom: none;
}
.docktab.on { height: 25px; background: #fff; border-color: #d9d9d9; width: 90px; }

.actions { display: flex; gap: 4px; padding: 14px 0 0 12px; }
.btn {
  width: 91px;
  height: 27px;
  box-sizing: border-box;
  background: #e1e1e1;
  border: 1px solid #adadad;
  display: flex;
  align-items: center;
  justify-content: center;
  gap: 4px;
}
.btn.off { background: #cccccc; border-color: #c4c4c4; color: #838383; }
.btn.qbtn { width: 31px; }
.bi { width: 14px; height: 14px; flex: none; }
.bi.big { width: 20px; height: 20px; }
.btnrow .bi.big { width: 22px; height: 22px; }
.searchrow { display: flex; align-items: center; padding: 9px 0 0 11px; height: 25px; gap: 3px; }
.search {
  width: 289px;
  height: 22px;
  box-sizing: border-box;
  background: #fff;
  border: 1px solid #7a7a7a;
  padding-left: 3px;
  color: #777;
  line-height: 20px;
  font-size: 13px;
  white-space: nowrap;
  overflow: hidden;
}
.gear { width: 25px; height: 24px; display: flex; align-items: center; justify-content: center; background: #e1e1e1; border: 1px solid #c4c4c4; box-sizing: border-box; }

.scroller { display: flex; margin-top: 7px; height: 414px; }
.panel { padding-left: 11px; width: 296px; flex: none; }
.secrow { display: flex; align-items: center; height: 29px; }
.secrow.second { margin-top: 14px; }
.secbtn {
  width: 149px;
  height: 29px;
  box-sizing: border-box;
  flex: none;
  background: #f0f0f0;
  border: 1px solid #7a7a7a;
  box-shadow: inset 0 0 0 1px #fff;
  display: flex;
  align-items: center;
  padding-left: 12px;
  overflow: hidden;
  white-space: nowrap;
}
.secbtn span { width: 102px; overflow: hidden; flex: none; }
.dash { width: 12px; height: 5px; background: #8ea0e0; border: 1px solid #223a88; margin-right: 10px; flex: none; box-sizing: border-box; }
.sq {
  width: 31px;
  height: 27px;
  box-sizing: border-box;
  margin-left: 6px;
  background: #e1e1e1;
  border: 1px solid #adadad;
  display: flex;
  align-items: center;
  justify-content: center;
  flex: none;
}
.sq:nth-child(2) { margin-left: 5px; }
.sq.dim { background: #cccccc; }
.prop { display: flex; align-items: flex-start; height: 22px; margin-top: 6px; }
.prop label { width: 97px; flex: none; line-height: 16px; margin-top: 2px; white-space: nowrap; }
.r-repr { margin-top: 7px; }
.r-repr label { margin-top: 0; }
.r-shader { margin-top: 5px; }
.grow { flex: 1; }
.combo.grow span { flex: 1; }
h4 {
  margin: 7px 0 0;
  height: 18px;
  box-sizing: border-box;
  border-bottom: 1px solid #9a9a9a;
  font-size: 12.5px;
  font-weight: 700;
  line-height: 20px;
  width: 296px;
}
h4.styling { margin-top: 8px; }
.colorrow { display: flex; align-items: center; margin-top: 6px; height: 26px; gap: 5px; }
.c-solid2 { width: 165px; height: 26px; padding-top: 1px; }
.c-off2 { width: 126px; background: #c8c8c8; border-color: #c8c8c8; }
.btnrow { display: flex; margin: 5px 0 0 1px; gap: 7px; }
.btnrow .btn { padding-top: 1px; }
.b-show { width: 93px; }
.b-edit { width: 94px; }
.b-resc { width: 93px; }
.slider {
  width: 70px;
  height: 6px;
  box-sizing: border-box;
  margin-top: 7px;
  background: #e4e4e4;
  border: 1px solid #d4d4d4;
  position: relative;
  flex: none;
}
.thumb { position: absolute; left: -1px; top: -8px; width: 12px; height: 21px; background: #0078d7; }
.slider.end .thumb { left: 56px; }
.field {
  height: 22px;
  box-sizing: border-box;
  background: #fff;
  border: 1px solid #7a7a7a;
  padding-left: 3px;
  line-height: 22px;
}
.field.short { width: 122px; margin-left: 7px; }
.r-view { margin-top: 6px; }

.scrollbar {
  width: 19px;
  margin-left: 2px;
  display: flex;
  flex-direction: column;
  align-items: center;
}
.sarrow { margin: 7px 0 6px; flex: none; }
.sarrow.down { margin: auto 0 6px; }
.sthumb {
  width: 19px;
  height: 251px;
  background: #c8c8c8;
  display: flex;
  align-items: center;
  justify-content: center;
}
.sthumb i { width: 11px; height: 12px; background: #f0f0f0; }

/* center */
.center { flex: 1; padding: 2px 5px 0 5px; display: flex; flex-direction: column; }
.layouttabs { height: 23px; display: flex; border-bottom: 1px solid #d0d0d0; }
.ltab {
  height: 23px;
  box-sizing: border-box;
  display: flex;
  align-items: center;
  padding-top: 2px;
}
.ltab.on { width: 115px; background: #fff; padding-left: 15px; gap: 3px; font-size: 12.5px; }
.ltab-box { width: 8px; height: 8px; border: 1px solid #111; box-shadow: inset 0 1px 0 #111; }
.ltab.plus {
  width: 35px;
  justify-content: center;
  background: #f0f0f0;
  border: 1px solid #d9d9d9;
  border-bottom: none;
  font-size: 14px;
}
.viewhead { height: 21px; background: #fff; display: flex; align-items: flex-start; width: 1480px; }
.viewtools {
  height: 18px;
  width: 362px;
  margin-left: 1px;
  box-sizing: border-box;
  background: #f0f0f0;
  border-right: 1px solid #bbb;
  border-bottom: 1px solid #bbb;
  display: flex;
  align-items: center;
  gap: 5px;
}
.vi { width: 14px; height: 14px; flex: none; }
.vsep { width: 1px; height: 13px; background: #c0c0c0; margin: 0 .5px; flex: none; }
.v3d { font: 11px "Liberation Sans", sans-serif; color: #444; width: 14px; text-align: center; flex: none; }
.viewname { margin-left: auto; font-weight: 700; font-size: 13px; text-decoration: underline; line-height: 21px; }
.viewbtns { display: flex; gap: 2px; margin: 3px 4px 0 12px; }
.vb {
  width: 18px;
  height: 15px;
  box-sizing: border-box;
  background: #e1e1e1;
  border: 1px solid #adadad;
  display: flex;
  align-items: center;
  justify-content: center;
}
.render {
  width: 1477px;
  height: 738px;
  box-sizing: border-box;
  margin: 1px 0 0 1px;
  border: 2px solid #0000ff;
  background: #fff;
  flex: none;
}
.scene { display: block; width: 1473px; height: 734px; }
.lg { font: 23.4px "Liberation Sans", sans-serif; fill: #151515; }
.ax { font: 14px "Liberation Sans", sans-serif; fill: #000; }
.tick { stroke: #222; stroke-width: 9; stroke-dasharray: 1 5.75; }
.major { stroke: #222; stroke-width: 1; fill: none; }

/* status */
.statusbar { height: 30px; position: relative; display: flex; align-items: flex-start; padding: 1px 0 0 905px; box-sizing: border-box; }
.stopbtn { width: 16px; height: 16px; margin-top: 7px; background: #ccc; display: flex; align-items: center; justify-content: center; }
.progress { width: 878px; height: 27px; margin-left: 3px; background: #e4e4e4; border: 1px solid #bdbdbd; box-sizing: border-box; }
.sizegrip { position: absolute; right: 0; bottom: 1px; }
```
